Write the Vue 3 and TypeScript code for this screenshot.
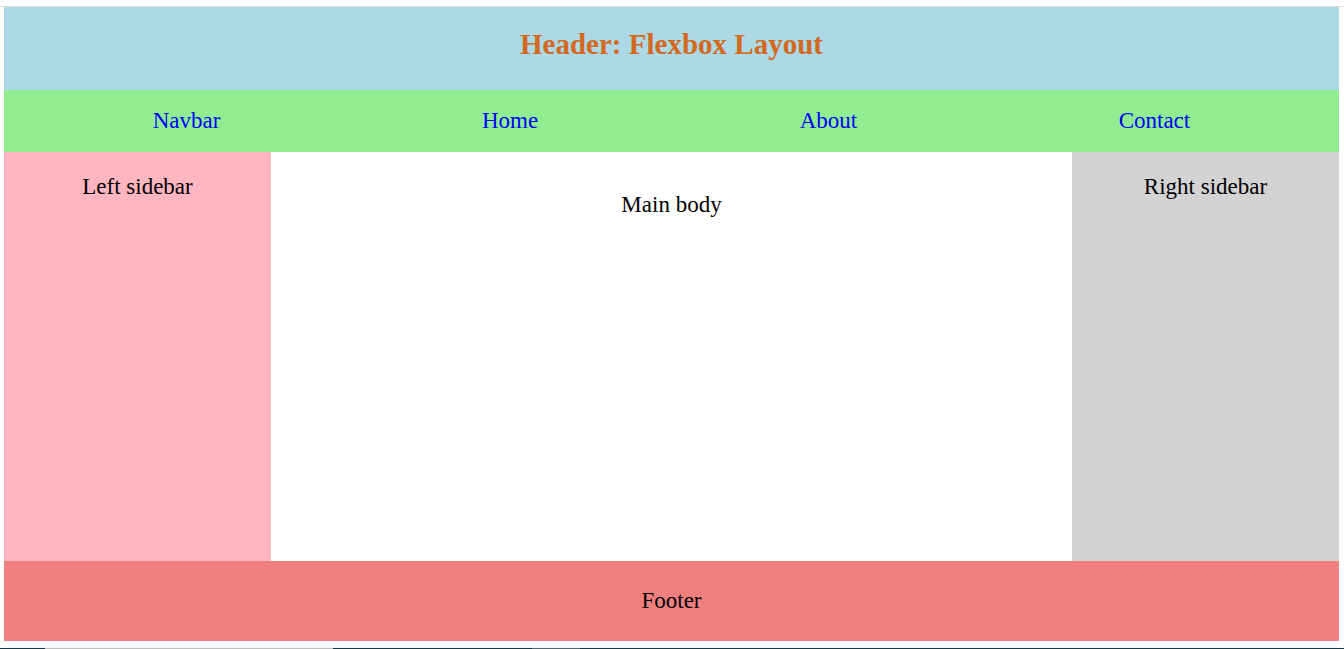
<script setup lang="ts">
interface NavItem {
  label: string
  href: string
}

const navItems: NavItem[] = [
  { label: 'Navbar', href: '#navbar' },
  { label: 'Home', href: '#home' },
  { label: 'About', href: '#about' },
  { label: 'Contact', href: '#contact' },
]
</script>

<template>
  <div class="page">
    <div class="top-rule"></div>
    <div class="layout">
      <header class="header">
        <h1>Header: Flexbox Layout</h1>
      </header>
      <nav class="navbar">
        <a v-for="item in navItems" :key="item.label" :href="item.href">{{ item.label }}</a>
      </nav>
      <div class="content">
        <aside class="left">Left sidebar</aside>
        <main class="main">Main body</main>
        <aside class="right">Right sidebar</aside>
      </div>
      <footer class="footer">Footer</footer>
    </div>
    <div class="taskbar">
      <span class="search"></span>
      <span class="active"></span>
    </div>
  </div>
</template>

<style>
body {
  margin: 0;
  background: #fff;
}
</style>

<style scoped>
.page {
  display: flex;
  flex-direction: column;
  box-sizing: border-box;
  min-height: 100vh;
  padding-top: 6px;
  font-family: "Liberation Serif", "Times New Roman", serif;
  font-size: 23px;
  line-height: 26px;
  color: #000;
}

.top-rule {
  height: 1px;
  background: #dcdcdc;
}

.layout {
  display: flex;
  flex: 1;
  flex-direction: column;
  margin: 0 5px 7px 4px;
  text-align: center;
}

.header {
  padding: 20px 18px 29px;
  background: lightblue;
}

h1 {
  margin: 0;
  font-size: 29px;
  line-height: 34px;
  color: chocolate;
}

.navbar {
  display: flex;
  justify-content: space-around;
  padding: 18px;
  background: lightgreen;
}

.navbar a {
  color: blue;
  text-decoration: none;
}

.content {
  display: grid;
  flex: 1;
  grid-template-columns: 1fr 3fr 1fr;
}

.left,
.right {
  padding: 22px 18px;
}

.left {
  background: lightpink;
}

.right {
  background: lightgray;
}

.main {
  padding: 40px 18px;
}

.footer {
  padding: 27px 18px;
  background: lightcoral;
}

.taskbar {
  display: flex;
  height: 1px;
  padding-left: 45px;
  background: #173647;
}

.search {
  width: 288px;
  margin-right: 199px;
  background: #bfbfbf;
}

.active {
  width: 48px;
  background: #506570;
}
</style>
